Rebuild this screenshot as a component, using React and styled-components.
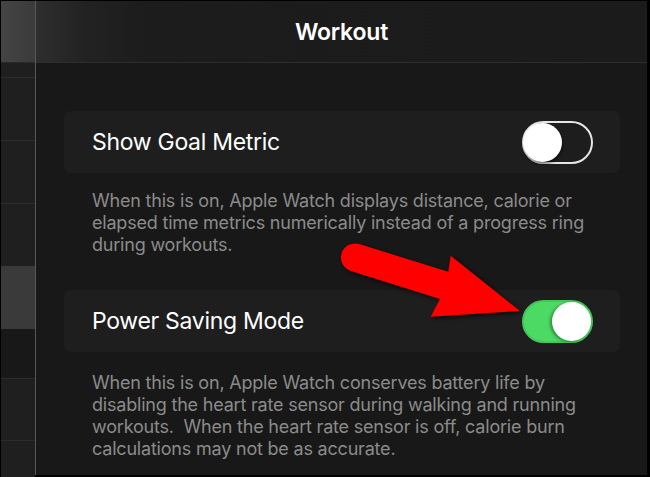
import React from 'react';
import styled, { createGlobalStyle } from 'styled-components';

const GlobalStyle = createGlobalStyle`
    html, body {
        margin: 0;
        padding: 0;
        background: #000;
    }
    * {
        box-sizing: border-box;
    }
`;

const sideRows = [
    { h: 15, tone: 'row', line: true },
    { h: 63, tone: 'row', line: true },
    { h: 63, tone: 'row', line: true },
    { h: 62, tone: 'row', line: false },
    { h: 63, tone: 'active', line: false },
    { h: 50, tone: 'gap', line: true },
    { h: 62, tone: 'row', line: true },
    { h: 36, tone: 'row', line: false },
];

const settings = [
    {
        label: 'Show Goal Metric',
        on: false,
        gap: 17,
        lines: [
            'When this is on, Apple Watch displays distance, calorie or',
            'elapsed time metrics numerically instead of a progress ring',
            'during workouts.',
        ],
    },
    {
        label: 'Power Saving Mode',
        on: true,
        gap: 20,
        lines: [
            'When this is on, Apple Watch conserves battery life by',
            'disabling the heart rate sensor during walking and running',
            'workouts.  When the heart rate sensor is off, calorie burn',
            'calculations may not be as accurate.',
        ],
    },
];

const Arrow = () => (
    <ArrowSvg viewBox="0 0 200 95" width="200" height="95">
        <path
            d="M29.2 9.1 L118.3 36.8 L120.7 20.7 L190 76 L100.7 81.7 L110 64 L20.8 35.9 A14 14 0 0 1 29.2 9.1 Z"
            fill="#ff0000"
        />
    </ArrowSvg>
);

const App = () => {
    return (
        <Frame>
            <GlobalStyle />
            <Screen>
                <Sidebar>
                    <SideHead />
                    {sideRows.map((r, i) => (
                        <SideRow key={i} $h={r.h} $tone={r.tone} $line={r.line} />
                    ))}
                </Sidebar>
                <Main>
                    <NavBar>
                        <NavTitle>Workout</NavTitle>
                    </NavBar>
                    <Content>
                        {settings.map((s) => (
                            <Group key={s.label}>
                                <Card>
                                    <Label>{s.label}</Label>
                                    <Toggle $on={s.on}>
                                        <Knob $on={s.on} />
                                    </Toggle>
                                </Card>
                                <Footnote $gap={s.gap}>
                                    {s.lines.map((l) => (
                                        <Line key={l}>{l}</Line>
                                    ))}
                                </Footnote>
                            </Group>
                        ))}
                    </Content>
                    <Arrow />
                </Main>
            </Screen>
        </Frame>
    );
};

const Frame = styled.div`
    width: 650px;
    height: 477px;
    padding: 1px 3px 2px 1px;
    background: #000;
    overflow: hidden;
`;

const Screen = styled.div`
    display: flex;
    height: 100%;
    font-family: Inter, 'Liberation Sans', sans-serif;
    background: #181818;
`;

const Sidebar = styled.div`
    width: 35px;
    flex-shrink: 0;
    display: flex;
    flex-direction: column;
    border-right: 1px solid #575757;
    background: #1e1e1e;
`;

const SideHead = styled.div`
    height: 62px;
    flex-shrink: 0;
    background: linear-gradient(90deg, #444 0%, #3b3b3b 100%);
    border-bottom: 1px solid #2a2a2a;
`;

const SideRow = styled.div`
    height: ${(p) => p.$h}px;
    flex-shrink: 0;
    background: ${(p) => (p.$tone === 'active' ? '#3a3a3a' : p.$tone === 'gap' ? '#181818' : '#1f1f1f')};
    border-bottom: ${(p) => (p.$line ? '1px solid #2c2c2c' : 'none')};
`;

const Main = styled.div`
    flex: 1;
    min-width: 0;
    position: relative;
    display: flex;
    flex-direction: column;
`;

const NavBar = styled.div`
    height: 62px;
    flex-shrink: 0;
    display: flex;
    align-items: center;
    justify-content: center;
    background: linear-gradient(90deg, #2e2e2e 0px, #222 50px, #1c1c1c 110px, #1b1b1b 100%);
    border-bottom: 1px solid #2d2d2d;
`;

const NavTitle = styled.h1`
    margin: 0;
    font-size: 23px;
    font-weight: 600;
    color: #fff;
    letter-spacing: -0.2px;
`;

const Content = styled.div`
    display: flex;
    flex-direction: column;
    gap: 34px;
    padding: 48px 27px 0 28px;
`;

const Group = styled.section`
    display: flex;
    flex-direction: column;
`;

const Card = styled.div`
    height: 62px;
    display: flex;
    align-items: center;
    justify-content: space-between;
    padding: 0 27px 0 28px;
    background: #1e1e1e;
    border-radius: 7px;
`;

const Label = styled.span`
    font-size: 23px;
    color: #fff;
    letter-spacing: -0.3px;
`;

const Toggle = styled.div`
    position: relative;
    width: 71px;
    height: 43px;
    border-radius: 22px;
    background: ${(p) => (p.$on ? '#4cd964' : '#1d1d1d')};
    border: 2px solid ${(p) => (p.$on ? '#44c75a' : '#e6e6e6')};
`;

const Knob = styled.div`
    position: absolute;
    top: 0;
    ${(p) => (p.$on ? 'right: 0;' : 'left: -1px;')}
    width: 39px;
    height: 39px;
    border-radius: 50%;
    background: #fff;
    box-shadow: ${(p) => (p.$on ? '-2px 1px 3px rgba(0,0,0,0.35)' : '1px 2px 3px rgba(0,0,0,0.5)')};
`;

const Footnote = styled.p`
    margin: ${(p) => p.$gap}px 0 0;
    padding: 0 28px;
    font-size: 18px;
    line-height: 22px;
    color: #8b8b8b;
    white-space: pre;
    letter-spacing: -0.2px;
`;

const Line = styled.span`
    display: block;
`;

const ArrowSvg = styled.svg`
    position: absolute;
    left: 294px;
    top: 234px;
    filter: drop-shadow(2px 2px 2px rgba(0, 0, 0, 0.7));
`;

export default App;
